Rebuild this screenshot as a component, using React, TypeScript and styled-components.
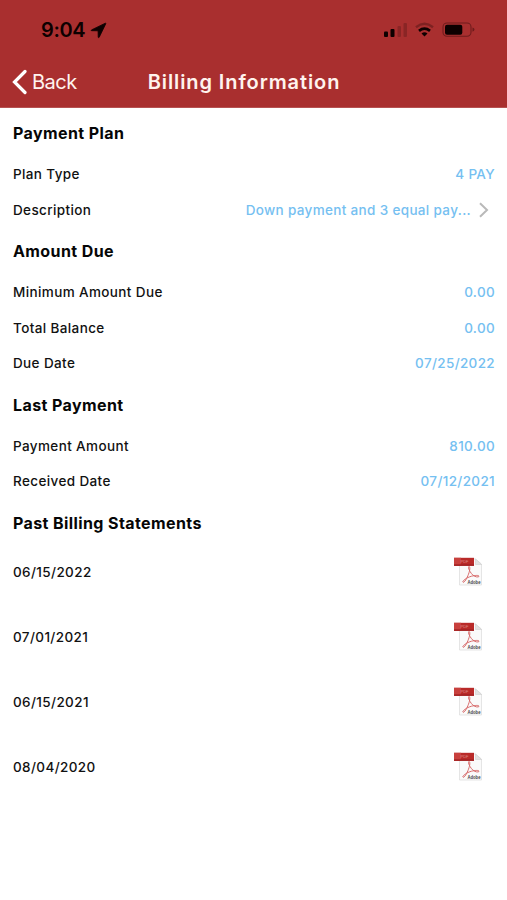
import React from "react";
import styled, { createGlobalStyle } from "styled-components";

const GlobalStyle = createGlobalStyle`
  * { box-sizing: border-box; }
  body { margin: 0; background: #fff; }
`;

const Screen = styled.div`
  width: 507px;
  height: 900px;
  overflow: hidden;
  background: #fff;
  color: #111;
  font-family: Inter, "Liberation Sans", sans-serif;
`;

const Header = styled.header`
  height: 108px;
  background: #a92f2f;
  border-bottom: 1px solid #b65252;
`;

const StatusBar = styled.div`
  height: 58px;
  padding: 2px 32px 0 41px;
  display: flex;
  align-items: center;
  justify-content: space-between;
  color: #0d0000;
`;

const Clock = styled.div`
  display: flex;
  align-items: center;
  gap: 5px;
  font-size: 20px;
  font-weight: 600;
  letter-spacing: -0.35px;
`;

const StatusIcons = styled.div`
  display: flex;
  align-items: center;
`;

const NavBar = styled.nav`
  height: 48px;
  padding: 0 12px;
  display: grid;
  grid-template-columns: 100px 1fr 119px;
  align-items: center;
  color: #fff3ee;
`;

const BackButton = styled.button`
  padding: 0;
  border: 0;
  background: none;
  display: flex;
  align-items: center;
  gap: 5px;
  color: inherit;
  font: 400 20px Inter, sans-serif;
  letter-spacing: -0.5px;
`;

const Title = styled.h1`
  margin: 0;
  text-align: center;
  white-space: nowrap;
  font-size: 20px;
  font-weight: 600;
  letter-spacing: 0.9px;
`;

const Content = styled.main`
  padding-top: 1.25px;
`;

const SectionTitle = styled.h2<{ $compact?: boolean }>`
  margin: 0;
  height: ${(p) => (p.$compact ? 41 : 47)}px;
  padding: ${(p) => (p.$compact ? "7px 13px 0" : "1px 13px 0")};
  display: flex;
  align-items: center;
  font-size: 16px;
  font-weight: 700;
  letter-spacing: 0.4px;
  color: #060606;
`;

const Row = styled.div<{ $tall?: boolean }>`
  height: ${(p) => (p.$tall ? 65 : 35.5)}px;
  padding: 0 ${(p) => (p.$tall ? 22 : 12)}px 0 13px;
  display: flex;
  align-items: center;
  justify-content: space-between;
  font-size: 13.5px;
  font-weight: 500;
  letter-spacing: 0.38px;
`;

const Value = styled.span`
  display: flex;
  align-items: center;
  gap: 8px;
  color: #75c0f1;
  letter-spacing: 0.34px;
`;

const Disclosure = styled.svg`
  margin-right: 6px;
`;

const PdfDrawing = styled.svg`
  overflow: visible;
`;

interface Entry { label: string; value: string; more?: boolean }

const sections: { title: string; rows: Entry[] }[] = [
  { title: "Payment Plan", rows: [
    { label: "Plan Type", value: "4 PAY" },
    { label: "Description", value: "Down payment and 3 equal pay...", more: true },
  ] },
  { title: "Amount Due", rows: [
    { label: "Minimum Amount Due", value: "0.00" },
    { label: "Total Balance", value: "0.00" },
    { label: "Due Date", value: "07/25/2022" },
  ] },
  { title: "Last Payment", rows: [
    { label: "Payment Amount", value: "810.00" },
    { label: "Received Date", value: "07/12/2021" },
  ] },
];

const statements = ["06/15/2022", "07/01/2021", "06/15/2021", "08/04/2020"];

const LocationIcon = () => (
  <svg width="17" height="17" viewBox="0 0 17 17">
    <path d="M15.300 1.200 1.500 7.900c-.5.300-.3.800.2.800l6.400.1.100 6.300c0 .6.700.700 1 .200L15.800 1.700c.2-.4-.1-.7-.5-.5Z" fill="currentColor" stroke="currentColor" strokeWidth=".8" strokeLinejoin="round" />
  </svg>
);

const PhoneStatus = () => (
  <svg width="92" height="20" viewBox="0 0 92 20" fill="none">
    <g fill="#0d0000">
      <rect x="1" y="11.5" width="4" height="5.500" rx="1" />
      <rect x="7.500" y="9" width="4" height="8" rx="1" />
      <rect x="14.5" y="6" width="3.5" height="11" rx="1" opacity=".2" />
      <rect x="20.500" y="3" width="3.5" height="14" rx="1" opacity=".2" />
    </g>
    <path d="M33 7.2Q41.500 .5 50 7.200" stroke="#0d0000" strokeWidth="2.400" opacity=".28" />
    <path d="M36 10.800q5.500-4.300 11 0" stroke="#0d0000" strokeWidth="2.800" />
    <path d="m38.500 13.500 3 3 3-3q-3-2.300-6 0Z" fill="#0d0000" />
    <rect x="60" y="3" width="28" height="13.300" rx="4" stroke="#701c1c" strokeWidth="1.100" />
    <rect x="62" y="4.700" width="17.300" height="10" rx="2" fill="#0d0000" />
    <path d="M89.500 7.500v4.200q2-.6 2-2.100t-2-2.100Z" fill="#6d1b1b" />
  </svg>
);

const PdfIcon = () => (
  <PdfDrawing width="32" height="32" viewBox="0 0 32 32">
    <path d="M6.500 3h16l6 5v21h-22Z" fill="#fafafa" stroke="#dedede" strokeWidth=".8" />
    <path d="M22.500 3v5.500h6Z" fill="#e3e3e3" stroke="#c8c8c8" strokeWidth=".5" />
    <path d="M1 1.800h20v8H1Z" fill="#b92a29" />
    <path d="M1 1.800h7v8H1Z" fill="#c8403d" />
    <path d="M1 8.300h20v1.500H1Z" fill="#a32324" />
    <text x="7.500" y="6.500" fontFamily="Liberation Sans" fontSize="4" letterSpacing="0" fill="#df8d88">PDF</text>
    <path d="M16 10.500c-1.500.2.500 5.500 3.700 8.400 2.700 2.500 6.300 2.500 6.300 1.300 0-1.500-7-.7-11 1.300-3.400 1.700-6 4-5 4.700 1.300.8 4-4 5.500-8s1.800-7.600.5-7.700Z" fill="none" stroke="#d86b6b" strokeWidth="1" />
    <text x="14.500" y="28" fontFamily="Liberation Sans" fontSize="5" fontWeight="700" letterSpacing="0" textLength="13" lengthAdjust="spacingAndGlyphs" fill="#444">Adobe</text>
  </PdfDrawing>
);

export default function App() {
  return (
    <Screen>
      <GlobalStyle />
      <Header>
        <StatusBar>
          <Clock>9:04 <LocationIcon /></Clock>
          <StatusIcons><PhoneStatus /></StatusIcons>
        </StatusBar>
        <NavBar>
          <BackButton>
            <svg width="15" height="26" viewBox="0 0 15 26" fill="none">
              <path d="M13 2.500 2.500 13 13 23.500" stroke="#fff" strokeWidth="3.200" strokeLinecap="round" />
            </svg>
            Back
          </BackButton>
          <Title>Billing Information</Title>
        </NavBar>
      </Header>
      <Content>
        {sections.map((section) => (
          <section key={section.title}>
            <SectionTitle>{section.title}</SectionTitle>
            {section.rows.map((row) => (
              <Row key={row.label}>
                <span>{row.label}</span>
                <Value>
                  {row.value}
                  {row.more && (
                    <Disclosure width="10" height="16" viewBox="0 0 10 16" fill="none">
                      <path d="m1 1.300 7 6.700-7 6.700" stroke="#b9b9b9" strokeWidth="2" />
                    </Disclosure>
                  )}
                </Value>
              </Row>
            ))}
          </section>
        ))}
        <section>
          <SectionTitle $compact>Past Billing Statements</SectionTitle>
          {statements.map((date) => (
            <Row key={date} $tall><span>{date}</span><PdfIcon /></Row>
          ))}
        </section>
      </Content>
    </Screen>
  );
}
